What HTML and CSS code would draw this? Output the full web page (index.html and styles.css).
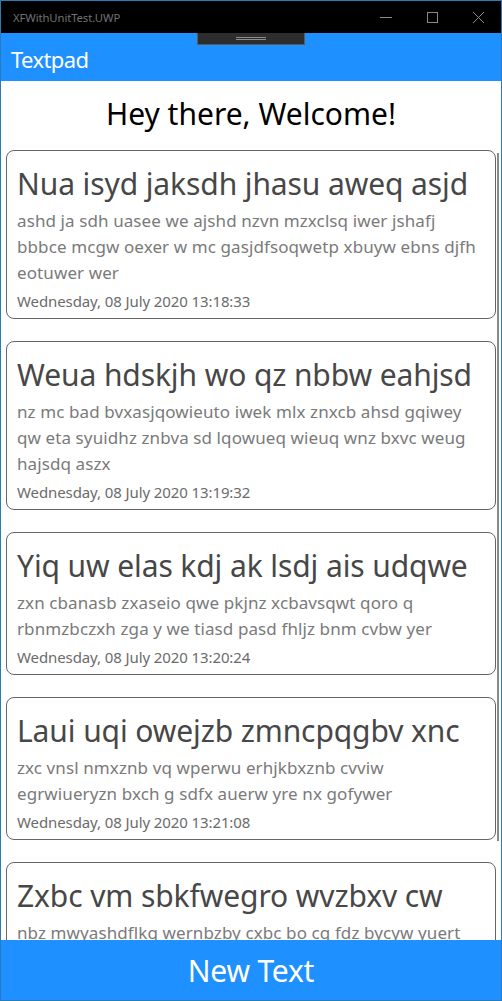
FILE: index.html
```html
<!DOCTYPE html>
<html>
<head>
<meta charset="utf-8">
<link rel="stylesheet" href="styles.css">
</head>
<body>
<div class="window">
  <div class="titlebar">
    <span class="app-title">XFWithUnitTest.UWP</span>
    <div class="controls">
      <svg class="ctl" width="46" height="32" viewBox="0 0 46 32"><line x1="17" y1="16.5" x2="29" y2="16.5" stroke="#8a8a8a" stroke-width="1"/></svg>
      <svg class="ctl" width="46" height="32" viewBox="0 0 46 32"><rect x="18.5" y="11.5" width="10" height="10" fill="none" stroke="#8a8a8a" stroke-width="1"/></svg>
      <svg class="ctl" width="46" height="32" viewBox="0 0 46 32"><path d="M18 11 L29 22 M29 11 L18 22" stroke="#8a8a8a" stroke-width="1"/></svg>
    </div>
  </div>
  <div class="navbar">
    <span class="nav-title">Textpad</span>
    <div class="grip"><span></span><span></span></div>
  </div>
  <div class="content">
    <div class="scroll">
      <h1 class="welcome">Hey there, Welcome!</h1>
      <div class="card">
        <div class="card-title">Nua isyd jaksdh jhasu aweq asjd</div>
        <div class="card-body">ashd ja sdh uasee we ajshd nzvn mzxclsq iwer jshafj bbbce mcgw oexer w mc gasjdfsoqwetp xbuyw ebns djfh eotuwer wer</div>
        <div class="card-date">Wednesday, 08 July 2020 13:18:33</div>
      </div>
      <div class="card">
        <div class="card-title">Weua hdskjh wo qz nbbw eahjsd</div>
        <div class="card-body">nz mc bad bvxasjqowieuto iwek mlx znxcb ahsd gqiwey qw eta syuidhz znbva sd lqowueq wieuq wnz bxvc weug hajsdq aszx</div>
        <div class="card-date">Wednesday, 08 July 2020 13:19:32</div>
      </div>
      <div class="card">
        <div class="card-title">Yiq uw elas kdj ak lsdj ais udqwe</div>
        <div class="card-body">zxn cbanasb zxaseio qwe pkjnz xcbavsqwt qoro q rbnmzbczxh zga y we tiasd pasd fhljz bnm cvbw yer</div>
        <div class="card-date">Wednesday, 08 July 2020 13:20:24</div>
      </div>
      <div class="card">
        <div class="card-title">Laui uqi owejzb zmncpqgbv xnc</div>
        <div class="card-body">zxc vnsl nmxznb vq wperwu erhjkbxznb cvviw egrwiueryzn bxch g sdfx auerw yre nx gofywer</div>
        <div class="card-date">Wednesday, 08 July 2020 13:21:08</div>
      </div>
      <div class="card">
        <div class="card-title">Zxbc vm sbkfwegro wvzbxv cw</div>
        <div class="card-body">nbz mwyashdflkg wernbzby cxbc bo cg fdz bycyw yuert</div>
        <div class="card-date">Wednesday, 08 July 2020 13:21:50</div>
      </div>
    </div>
    <div class="scrollbar"></div>
  </div>
  <div class="button">New Text</div>
</div>
</body>
</html>
```
FILE: styles.css
```css
html, body {
  margin: 0;
  padding: 0;
  background: #ffffff;
}
body {
  font-family: "Noto Sans", "Open Sans", sans-serif;
}
.window {
  width: 502px;
  height: 1001px;
  box-sizing: border-box;
  border: 1px solid #2a7bb9;
  display: flex;
  flex-direction: column;
  overflow: hidden;
}
.titlebar {
  height: 32px;
  flex: none;
  background: #000000;
  display: flex;
  align-items: center;
  justify-content: space-between;
}
.app-title {
  color: #727272;
  font-size: 11.3px;
  padding-left: 12px;
  letter-spacing: -0.1px;
}
.controls {
  display: flex;
}
.ctl {
  display: block;
}
.navbar {
  height: 48px;
  flex: none;
  background: #1e90ff;
  position: relative;
  display: flex;
  align-items: center;
}
.nav-title {
  color: #ffffff;
  font-size: 22px;
  padding-left: 10px;
  letter-spacing: -0.6px;
  margin-top: 4px;
}
.grip {
  position: absolute;
  left: 196px;
  top: 0;
  width: 106px;
  height: 11px;
  background: #2d2d2d;
  border: 1px solid #5a5a5a;
  border-top: none;
  display: flex;
  flex-direction: column;
  align-items: center;
  justify-content: center;
  gap: 1px;
}
.grip span {
  display: block;
  width: 30px;
  height: 1px;
  background: #8c8c8c;
}
.content {
  flex: 1;
  position: relative;
  overflow: hidden;
}
.scroll {
  padding: 0 5px 0 5px;
}
.welcome {
  margin: 0;
  font-weight: normal;
  text-align: center;
  font-size: 30px;
  line-height: 36px;
  padding-top: 15px;
  padding-bottom: 18px;
  color: #000000;
  letter-spacing: 0;
}
.card {
  border: 1px solid #666666;
  border-radius: 8px;
  padding: 11px 10px 6px 10px;
  margin-bottom: 22px;
  display: flex;
  flex-direction: column;
}
.card-title {
  font-size: 30px;
  line-height: 44px;
  color: #474747;
  letter-spacing: -0.1px;
  white-space: nowrap;
}
.card-body {
  font-size: 17px;
  line-height: 26px;
  color: #7a7a7a;
  margin-top: 2px;
  letter-spacing: 0.1px;
}
.card-date {
  font-size: 15px;
  line-height: 22px;
  color: #6b6b6b;
  margin-top: 4px;
  letter-spacing: -0.1px;
}
.scrollbar {
  position: absolute;
  right: 2px;
  top: 72px;
  width: 2px;
  height: 688px;
  background: #8a8a8a;
}
.button {
  height: 60px;
  flex: none;
  background: #1e90ff;
  color: #ffffff;
  font-size: 30px;
  display: flex;
  align-items: center;
  justify-content: center;
  letter-spacing: -0.2px;
}
```
